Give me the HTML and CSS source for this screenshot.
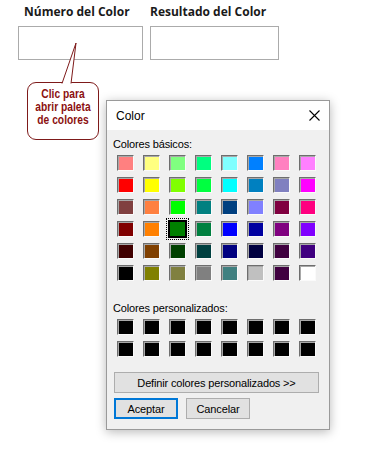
FILE: index.html
```html
<!DOCTYPE html>
<html lang="es">
<head>
    <meta charset="UTF-8">
    <meta name="viewport" content="width=device-width, initial-scale=1.0">
    <title>Selector de color</title>
    <link rel="stylesheet" href="styles.css">
</head>
<body>

    <main class="page">
        <div class="fields">
            <div class="field field-num">
                <label>Número del Color</label>
                <div class="box"></div>
            </div>
            <div class="field field-res">
                <label>Resultado del Color</label>
                <div class="box"></div>
            </div>
        </div>

        <div class="dialog">
            <div class="titlebar">
                <span>Color</span>
                <svg class="close" width="11" height="11" viewBox="0 0 11 11">
                    <path d="M0.5 0.5 L10.5 10.5 M10.5 0.5 L0.5 10.5" stroke="#000" stroke-width="1.1" fill="none"/>
                </svg>
            </div>
            <div class="dialog-body">
                <p class="caption">Colores básicos:</p>
                <div class="swatches">
                    <span class="sw" style="background:#ff8080"></span>
                    <span class="sw" style="background:#ffff80"></span>
                    <span class="sw" style="background:#80ff80"></span>
                    <span class="sw" style="background:#00ff80"></span>
                    <span class="sw" style="background:#80ffff"></span>
                    <span class="sw" style="background:#0080ff"></span>
                    <span class="sw" style="background:#ff80c0"></span>
                    <span class="sw" style="background:#ff80ff"></span>

                    <span class="sw" style="background:#ff0000"></span>
                    <span class="sw" style="background:#ffff00"></span>
                    <span class="sw" style="background:#80ff00"></span>
                    <span class="sw" style="background:#00ff40"></span>
                    <span class="sw" style="background:#00ffff"></span>
                    <span class="sw" style="background:#0080c0"></span>
                    <span class="sw" style="background:#8080c0"></span>
                    <span class="sw" style="background:#ff00ff"></span>

                    <span class="sw" style="background:#804040"></span>
                    <span class="sw" style="background:#ff8040"></span>
                    <span class="sw" style="background:#00ff00"></span>
                    <span class="sw" style="background:#008080"></span>
                    <span class="sw" style="background:#004080"></span>
                    <span class="sw" style="background:#8080ff"></span>
                    <span class="sw" style="background:#800040"></span>
                    <span class="sw" style="background:#ff0080"></span>

                    <span class="sw" style="background:#800000"></span>
                    <span class="sw" style="background:#ff8000"></span>
                    <span class="sw selected" style="background:#008000"></span>
                    <span class="sw" style="background:#008040"></span>
                    <span class="sw" style="background:#0000ff"></span>
                    <span class="sw" style="background:#0000a0"></span>
                    <span class="sw" style="background:#800080"></span>
                    <span class="sw" style="background:#8000ff"></span>

                    <span class="sw" style="background:#400000"></span>
                    <span class="sw" style="background:#804000"></span>
                    <span class="sw" style="background:#004000"></span>
                    <span class="sw" style="background:#004040"></span>
                    <span class="sw" style="background:#000080"></span>
                    <span class="sw" style="background:#000040"></span>
                    <span class="sw" style="background:#400040"></span>
                    <span class="sw" style="background:#400080"></span>

                    <span class="sw" style="background:#000000"></span>
                    <span class="sw" style="background:#808000"></span>
                    <span class="sw" style="background:#808040"></span>
                    <span class="sw" style="background:#808080"></span>
                    <span class="sw" style="background:#408080"></span>
                    <span class="sw" style="background:#c0c0c0"></span>
                    <span class="sw" style="background:#400040"></span>
                    <span class="sw" style="background:#ffffff"></span>
                </div>

                <p class="caption caption-custom">Colores personalizados:</p>
                <div class="swatches custom">
                    <span class="sw"></span><span class="sw"></span><span class="sw"></span><span class="sw"></span>
                    <span class="sw"></span><span class="sw"></span><span class="sw"></span><span class="sw"></span>
                    <span class="sw"></span><span class="sw"></span><span class="sw"></span><span class="sw"></span>
                    <span class="sw"></span><span class="sw"></span><span class="sw"></span><span class="sw"></span>
                </div>

                <button class="btn btn-wide">Definir colores personalizados &gt;&gt;</button>
                <div class="actions">
                    <button class="btn btn-default">Aceptar</button>
                    <button class="btn">Cancelar</button>
                </div>
            </div>
        </div>

        <div class="callout">
            <p>Clic para<br>abrir paleta<br>de colores</p>
            <svg class="tail" width="30" height="48" viewBox="0 0 30 48">
                <polygon points="7,45 21,4 16,45" fill="#fff"/>
                <polyline points="7,44.5 21,4 16,44.5" fill="none" stroke="#7e1a1a" stroke-width="1"/>
            </svg>
        </div>
    </main>

</body>
</html>
```

FILE: styles.css
```css
body {
    margin: 0;
    background-color: #fff;
    font-family: 'Liberation Sans', Arial, sans-serif;
}

.page {
    position: relative;
    width: 391px;
    height: 464px;
    overflow: hidden;
}

.fields {
    display: flex;
    gap: 7px;
    padding: 3px 0 0 18px;
}

.field label {
    display: block;
    font-family: 'Open Sans', sans-serif;
    font-weight: bold;
    font-size: 12px;
    line-height: 17px;
    color: #1a1a1a;
    margin-bottom: 6px;
}

.field-num {
    width: 125px;
}

.field-num label {
    padding-left: 6px;
}

.field-res {
    width: 129px;
}

.box {
    height: 32px;
    border: 1px solid #ababab;
    background-color: #fff;
}

/* Ventana de colores */
.dialog {
    margin: 40px 0 0 106px;
    width: 222px;
    height: 328px;
    border: 1px solid #9a9a9a;
    background-color: #f0f0f0;
    box-shadow: 0 2px 10px rgba(0, 0, 0, 0.28);
}

.titlebar {
    display: flex;
    justify-content: space-between;
    align-items: center;
    height: 29px;
    padding: 0 9px 0 9px;
    background-color: #fff;
    font-size: 12px;
    color: #000;
}

.dialog-body {
    padding: 8px 0 0 6px;
    font-size: 11px;
    color: #000;
}

.caption {
    margin: 0;
    line-height: 13px;
    letter-spacing: -0.15px;
}

.caption-custom {
    margin-top: 21px;
}

.swatches {
    display: grid;
    grid-template-columns: repeat(8, 17px);
    grid-auto-rows: 16px;
    column-gap: 9px;
    row-gap: 6px;
    margin: 4px 0 0 4px;
}

.swatches.custom {
    margin-top: 4px;
}

.sw {
    box-sizing: border-box;
    border: 1px solid;
    border-color: #6e6e6e #fafafa #fafafa #6e6e6e;
    box-shadow: inset 1px 1px 0 #a8a8a8;
    background-color: #000;
}

.sw.selected {
    border-color: #000;
    box-shadow: 0 0 0 1px #000;
    outline: 1px dotted #000;
    outline-offset: 2px;
}

.btn {
    box-sizing: border-box;
    height: 21px;
    padding: 0;
    font-family: 'Liberation Sans', Arial, sans-serif;
    font-size: 11px;
    letter-spacing: -0.15px;
    color: #000;
    background-color: #e1e1e1;
    border: 1px solid #adadad;
    border-radius: 0;
}

.btn-wide {
    display: block;
    width: 205px;
    margin: 15px 0 0 1px;
}

.actions {
    display: flex;
    gap: 8px;
    margin: 5px 0 0 1px;
}

.actions .btn {
    width: 64px;
}

.btn-default {
    border-color: #0078d7;
    box-shadow: inset 0 0 0 1px #0078d7;
}

/* Bulle d'aide */
.callout {
    position: absolute;
    left: 27px;
    top: 82px;
    box-sizing: border-box;
    width: 72px;
    height: 58px;
    border: 1.5px solid #7e1a1a;
    border-radius: 9px;
    background-color: #fff;
}

.callout p {
    margin: 0 -20px;
    padding-top: 5px;
    white-space: nowrap;
    text-align: center;
    font-family: 'Liberation Sans', sans-serif;
    font-weight: bold;
    font-size: 12.5px;
    line-height: 13px;
    color: #8b1010;
    transform: scaleX(0.82);
}

.tail {
    position: absolute;
    left: 27px;
    top: -44px;
}
```
